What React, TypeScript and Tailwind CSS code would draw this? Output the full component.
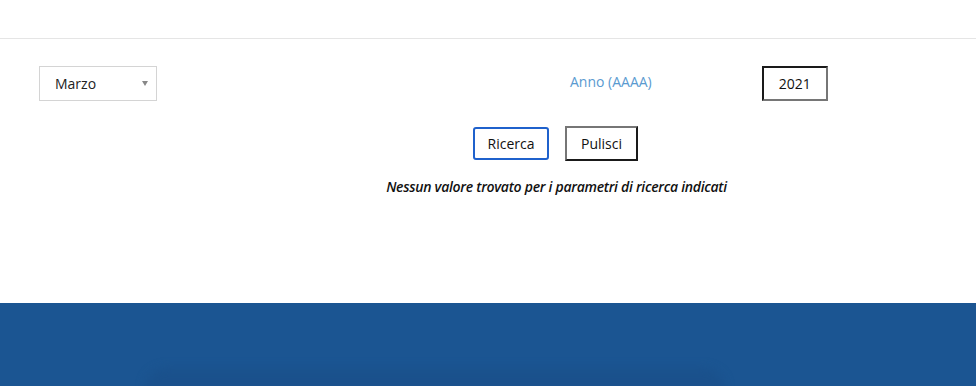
export default function App() {
  return (
    <div className="min-h-[386px] bg-white flex flex-col" style={{ fontFamily: '"Open Sans", "Noto Sans", sans-serif' }}>
      <div className="h-[39px] border-b border-[#e5e5e5]" />

      <div className="h-[264px]">
        <div className="flex items-start pt-[27px]">
          <div className="ml-[39px] w-[118px] h-[35px] border border-[#d4d4d4] flex items-center justify-between pl-[15px] pr-[8px] text-[14px] text-[#222]">
            <span>Marzo</span>
            <span className="w-0 h-0 border-l-[3.5px] border-r-[3.5px] border-t-[5px] border-l-transparent border-r-transparent border-t-[#888]" />
          </div>
          <div className="ml-[413px] mt-[5px] text-[14px] text-[#5a9ad0]">Anno (AAAA)</div>
          <div className="ml-[110px] w-[66px] h-[35px] border-2 border-t-[#1a1a1a] border-l-[#1a1a1a] border-r-[#767676] border-b-[#767676] flex items-center justify-center text-[14px] text-[#111]">
            2021
          </div>
        </div>

        <div className="flex justify-center gap-[16px] mt-[25px] pl-[135px]">
          <button className="w-[76px] h-[33px] rounded-[3px] border-2 border-[#1f61cc] text-[14px] text-[#111] bg-white mt-[1px]">
            Ricerca
          </button>
          <button className="w-[73px] h-[35px] border-2 border-t-[#767676] border-l-[#767676] border-r-[#1a1a1a] border-b-[#1a1a1a] text-[14px] text-[#111] bg-white">
            Pulisci
          </button>
        </div>

        <p className="text-center pl-[137px] mt-[15px] text-[14px] italic font-semibold text-[#111] tracking-[-0.28px]">
          Nessun valore trovato per i parametri di ricerca indicati
        </p>
      </div>

      <div className="flex-1 bg-[#1b5592] flex flex-col justify-end overflow-hidden">
        <div className="ml-[145px] w-[580px] h-[22px] rounded-t-[30px] bg-[#1a518c] blur-[5px] -mb-[4px]" />
      </div>
    </div>
  );
}
